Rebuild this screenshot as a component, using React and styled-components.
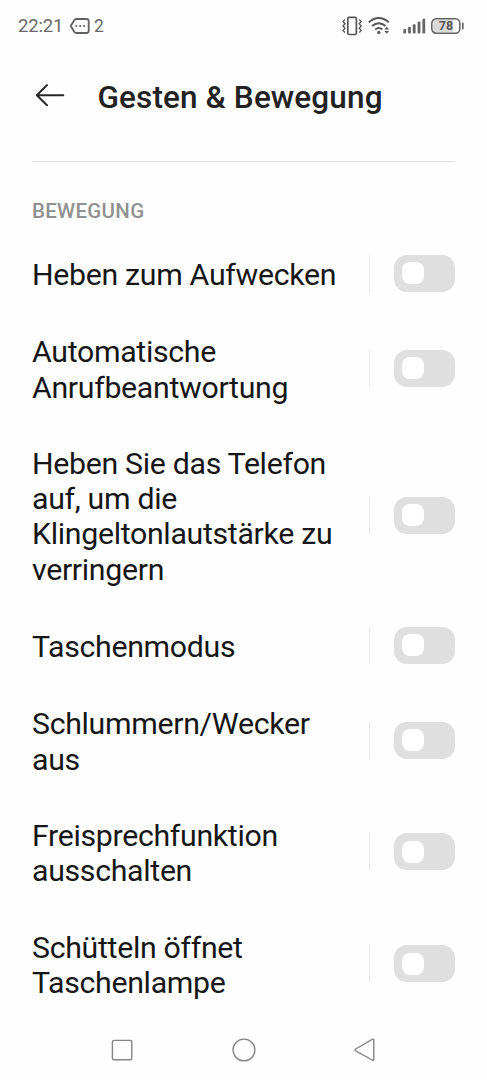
import React from "react";
import styled, { createGlobalStyle } from "styled-components";

const GlobalStyle = createGlobalStyle`
  * { box-sizing: border-box; }
  body { margin: 0; background: #fefefe; font-family: Roboto, "Liberation Sans", sans-serif; }
`;

const Screen = styled.div`
  height: 1080px;
  display: flex;
  flex-direction: column;
  overflow: hidden;
`;

const StatusBar = styled.header`
  height: 50px;
  padding: 1px 23px 0 18px;
  display: flex;
  justify-content: space-between;
  align-items: center;
  color: #686868;
  font-size: 18.5px;
`;

const StatusGroup = styled.div`
  display: flex;
  align-items: center;
`;

const Clock = styled.span`
  width: 52px;
  letter-spacing: -0.15px;
  white-space: nowrap;
`;

const NoticeCount = styled.span`
  margin: 1px 0 0 4px;
  font-size: 17.5px;
`;

const StatusIcon = styled.svg`
  display: block;
  margin-right: ${(p) => p.$gap || 0}px;
`;

const BatteryText = styled.text`
  font: 700 12.5px Roboto, sans-serif;
  fill: #555;
`;

const TitleBar = styled.div`
  height: 111px;
  margin: 0 32px;
  border-bottom: 1px solid #e2e2e2;
  box-sizing: content-box;
  display: flex;
  align-items: flex-start;
`;

const BackButton = styled.button`
  width: 65.5px;
  height: 24px;
  margin-top: 33px;
  padding: 0 0 0 3px;
  border: 0;
  background: none;
`;

const Title = styled.h1`
  margin: 30px 0 0;
  font-size: 31.5px;
  line-height: 36px;
  font-weight: 500;
  letter-spacing: 0.12px;
  color: #222;
  white-space: nowrap;
`;

const SectionLabel = styled.h2`
  height: 72px;
  margin: 0;
  padding: 37px 32px 0;
  font-size: 20.5px;
  line-height: 24px;
  font-weight: 500;
  letter-spacing: 0.3px;
  color: #919191;
`;

const List = styled.main`
  flex: 1;
  min-height: 0;
  padding: 0 32px;
`;

const Row = styled.div`
  display: flex;
  align-items: center;
  padding: 20.7px 0;
`;

const RowLabel = styled.div`
  flex: 1;
  padding-top: 1.3px;
  margin-bottom: -1.3px;
  font-size: 30.3px;
  line-height: 35.15px;
  letter-spacing: -0.32px;
  color: #161616;
  white-space: nowrap;
`;

const Divider = styled.span`
  width: 1px;
  height: 37px;
  margin-right: 24px;
  background: #e6e6e6;
`;

const Switch = styled.button`
  width: 61px;
  height: 37px;
  padding: 0 7.5px;
  border: 0;
  border-radius: 13px;
  background: #dfdfdf;
  display: flex;
  align-items: center;
`;

const Thumb = styled.span`
  width: 22px;
  height: 22px;
  border-radius: 8px;
  background: #fff;
`;

const NavBar = styled.nav`
  height: 60px;
  padding: 0 110px;
  display: flex;
  align-items: center;
  justify-content: space-between;
`;

const settings = [
  ["Heben zum Aufwecken"],
  ["Automatische", "Anrufbeantwortung"],
  ["Heben Sie das Telefon", "auf, um die", "Klingeltonlautstärke zu", "verringern"],
  ["Taschenmodus"],
  ["Schlummern/Wecker", "aus"],
  ["Freisprechfunktion", "ausschalten"],
  ["Schütteln öffnet", "Taschenlampe"],
];

function SettingRow({ lines }) {
  return (
    <Row>
      <RowLabel>
        {lines.map((line) => (
          <div key={line}>{line}</div>
        ))}
      </RowLabel>
      <Divider />
      <Switch role="switch" aria-checked="false" aria-label={lines.join(" ")}>
        <Thumb />
      </Switch>
    </Row>
  );
}

export default function App() {
  return (
    <Screen>
      <GlobalStyle />
      <StatusBar>
        <StatusGroup>
          <Clock>22:21</Clock>
          <StatusIcon width="20" height="16" viewBox="0 0 20 16" fill="none" stroke="#606060" strokeWidth="1.8">
            <path d="M6.3 1H16.5Q18.7 1 18.7 3.2V12.8Q18.7 15 16.5 15H6.3Q5 15 4.2 13.8L1.2 8.8Q.8 8 1.2 7.2L4.2 2.2Q5 1 6.3 1Z" />
            <g fill="#606060" stroke="none">
              <circle cx="6.3" cy="8" r="1.1" />
              <circle cx="10.2" cy="8" r="1.1" />
              <circle cx="14.1" cy="8" r="1.1" />
            </g>
          </StatusIcon>
          <NoticeCount>2</NoticeCount>
        </StatusGroup>
        <StatusGroup>
          <StatusIcon $gap={6} width="20" height="20" viewBox="0 0 20 20" fill="none" stroke="#555">
            <rect x="5.8" y="1.3" width="8.6" height="17.2" rx="1.5" strokeWidth="1.7" />
            <path d="M3 3.5L1 5.5L3 7.7L1 10L3 12.2L1 14.4L3 16.5M17.2 3.5L19.2 5.5L17.2 7.7L19.2 10L17.2 12.2L19.2 14.4L17.2 16.5" strokeWidth="1.3" />
          </StatusIcon>
          <StatusIcon $gap={13} width="22" height="18" viewBox="0 0 22 18" fill="none" stroke="#555" strokeWidth="1.9">
            <path d="M.8 5.2Q10.8-3 20.8 5.2M4 9Q10.8 3.3 17.6 9M7.2 12.4Q10.8 9.6 14.4 12.4" />
            <circle cx="10.8" cy="15.4" r="1.7" fill="#555" stroke="none" />
            <path d="M16.3 12.6L18.7 9.8L21.1 12.6ZM16.3 14L18.7 16.8L21.1 14Z" fill="#555" stroke="none" />
          </StatusIcon>
          <StatusIcon $gap={5} width="23" height="16" viewBox="0 0 23 16" fill="#666">
            <rect x=".3" y="11" width="2.8" height="4.5" rx="1" />
            <rect x="5.1" y="8.7" width="2.8" height="6.8" rx="1" />
            <rect x="9.8" y="6.2" width="2.8" height="9.3" rx="1" />
            <rect x="14.6" y="3.6" width="2.8" height="11.9" rx="1" />
            <rect x="19.4" y=".8" width="2.8" height="14.7" rx="1" />
          </StatusIcon>
          <StatusIcon width="33" height="16" viewBox="0 0 33 16">
            <path d="M5 2H22V14H5Q2 14 2 11V5Q2 2 5 2Z" fill="#dadada" />
            <rect x=".8" y=".8" width="28" height="14.4" rx="4.5" fill="none" stroke="#606060" strokeWidth="1.5" />
            <path d="M31.8 5.2V10.8" stroke="#606060" strokeWidth="1.6" strokeLinecap="round" />
            <BatteryText x="15" y="12.4" textAnchor="middle">78</BatteryText>
          </StatusIcon>
        </StatusGroup>
      </StatusBar>
      <TitleBar>
        <BackButton aria-label="Zurück">
          <StatusIcon width="30" height="24" viewBox="0 0 30 24" fill="none" stroke="#262626" strokeWidth="2" strokeLinecap="round" strokeLinejoin="round">
            <path d="M28.3 12.3H1.8M12 2.1L1.8 12.3L12 22.3" />
          </StatusIcon>
        </BackButton>
        <Title>Gesten &amp; Bewegung</Title>
      </TitleBar>
      <SectionLabel>BEWEGUNG</SectionLabel>
      <List>
        {settings.map((lines) => (
          <SettingRow key={lines[0]} lines={lines} />
        ))}
      </List>
      <NavBar>
        <StatusIcon width="24" height="24" viewBox="0 0 24 24" fill="none" stroke="#858585" strokeWidth="1.4">
          <rect x="2.4" y="2.4" width="19.4" height="19.4" rx="1.5" />
        </StatusIcon>
        <StatusIcon width="24" height="24" viewBox="0 0 24 24" fill="none" stroke="#858585" strokeWidth="1.4">
          <circle cx="12" cy="12" r="10.9" />
        </StatusIcon>
        <StatusIcon width="24" height="24" viewBox="0 0 24 24" fill="none" stroke="#858585" strokeWidth="1.4" strokeLinejoin="round">
          <path d="M2.7 11L19.2 1.4Q20.8.7 20.8 2.3V21.2Q20.8 22.8 19.2 22L2.7 12.8Q1.3 11.9 2.7 11Z" />
        </StatusIcon>
      </NavBar>
    </Screen>
  );
}
